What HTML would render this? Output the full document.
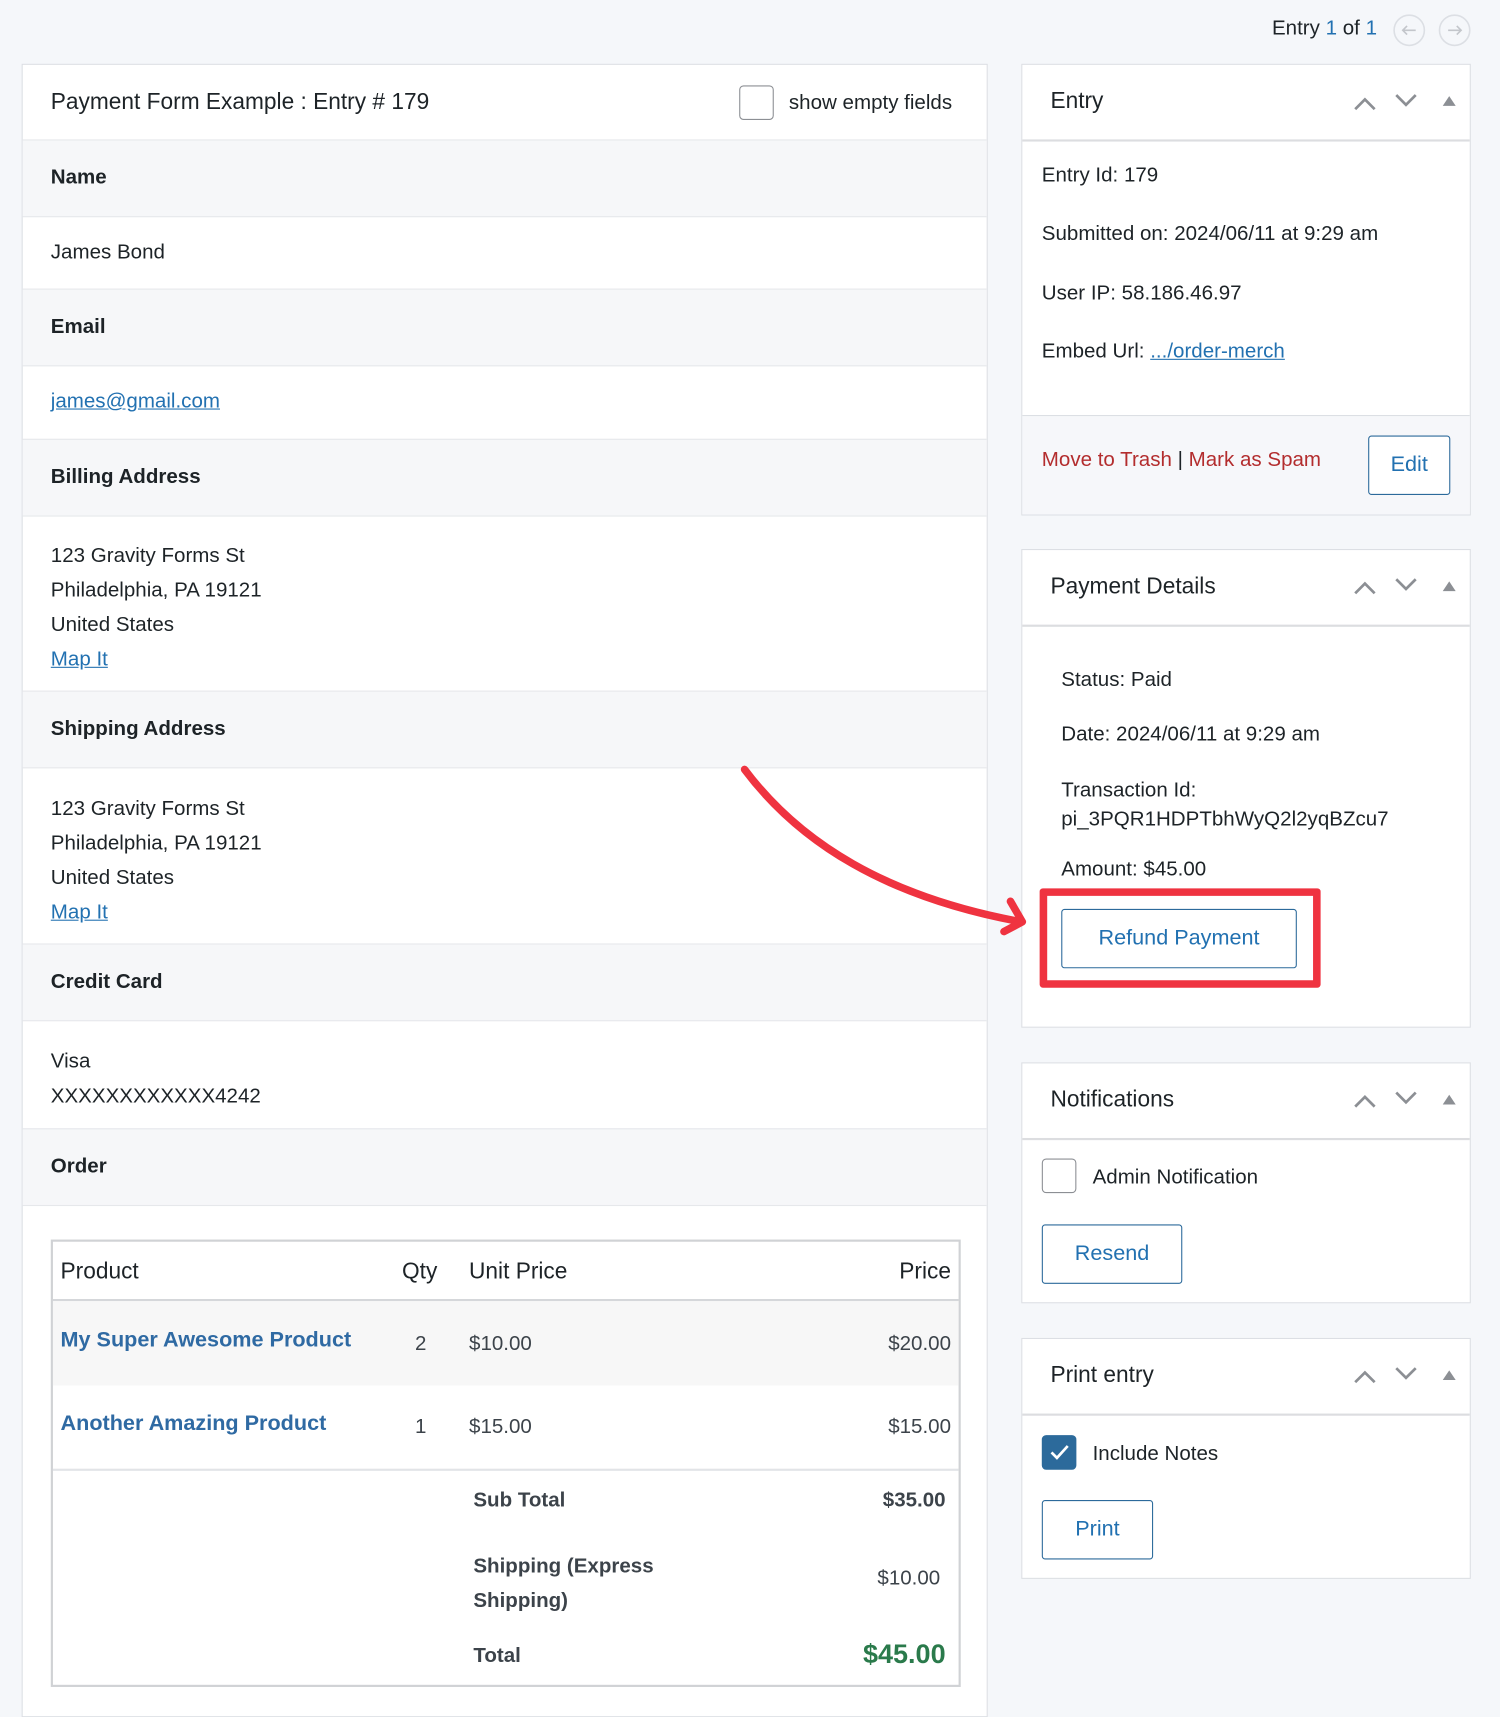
<!DOCTYPE html>
<html><head><meta charset="utf-8"><style>
html,body{margin:0;padding:0;width:1500px;height:1694px;overflow:hidden;background:#f5f7fa}
#w{position:absolute;left:0;top:0;width:1388px;height:1568px;transform:scale(1.0807);transform-origin:0 0;font-family:"Liberation Sans",sans-serif;color:#1d2327;font-size:19px}
.a{position:absolute;white-space:nowrap}
.box{position:absolute;background:#fff;border:1px solid #dcdfe4;box-sizing:border-box}
.lab{position:absolute;left:0;right:0;background:#f6f7f9;border-top:1px solid #e6e8eb;border-bottom:1px solid #e6e8eb;font-weight:bold}
.lab span,.val span{position:absolute;left:26px}
.hd{position:absolute;left:0;right:0;top:0;height:69px;border-bottom:2px solid #dcdde0}
.hd .t{position:absolute;left:26px;top:22px;font-size:21px}
a,.lk{color:#2271b1;text-decoration:underline}
.btn{position:absolute;border:1.5px solid #2c6a9b;border-radius:3px;color:#2271b1;font-size:20px;text-align:center;box-sizing:border-box;background:#fff}
.cb{position:absolute;width:32px;height:32px;border:1.5px solid #8c8f94;border-radius:4px;box-sizing:border-box;background:#fff}
.narrow{font-family:"Liberation Sans Narrow","Liberation Sans",sans-serif}
</style></head><body><div id="w">
<div class="a" style="left:1177px;top:16px;font-size:19px">Entry <span style="color:#2271b1">1</span> of <span style="color:#2271b1">1</span></div>
<svg class="a" style="left:1288px;top:12px" width="74" height="32"><circle cx="16" cy="16" r="14" fill="none" stroke="#dcdfe4" stroke-width="1.5"/><path d="M22 16H10M14 12l-4 4 4 4" stroke="#c3c6cb" stroke-width="1.5" fill="none"/><circle cx="58" cy="16" r="14" fill="none" stroke="#dcdfe4" stroke-width="1.5"/><path d="M52 16h12M60 12l4 4-4 4" stroke="#c3c6cb" stroke-width="1.5" fill="none"/></svg>

<div class="box" style="left:20px;top:59px;width:894px;height:1530px">
 <div class="a" style="left:26px;top:23px;font-size:21px">Payment Form Example : Entry # 179</div>
 <div class="cb" style="left:663px;top:19px"></div>
 <div class="a" style="left:709px;top:25px;font-size:19px">show empty fields</div>
 <div class="lab" style="top:69px;height:70px"><span style="top:24px">Name</span></div>
 <div class="a" style="left:26px;top:163px">James Bond</div>
 <div class="lab" style="top:207px;height:70px"><span style="top:24px">Email</span></div>
 <div class="a" style="left:26px;top:301px"><span class="lk">james@gmail.com</span></div>
 <div class="lab" style="top:346px;height:70px"><span style="top:24px">Billing Address</span></div>
 <div class="a" style="left:26px;top:439px;line-height:32px">123 Gravity Forms St<br>Philadelphia, PA 19121<br>United States<br><span class="lk">Map It</span></div>
 <div class="lab" style="top:579px;height:70px"><span style="top:24px">Shipping Address</span></div>
 <div class="a" style="left:26px;top:673px;line-height:32px">123 Gravity Forms St<br>Philadelphia, PA 19121<br>United States<br><span class="lk">Map It</span></div>
 <div class="lab" style="top:813px;height:70px"><span style="top:24px">Credit Card</span></div>
 <div class="a" style="left:26px;top:907px;line-height:32px">Visa<br>XXXXXXXXXXXX4242</div>
 <div class="lab" style="top:984px;height:70px"><span style="top:24px">Order</span></div>
 <div style="position:absolute;left:26px;top:1087px;width:842px;height:414px;border:2px solid #d0d2d5;box-sizing:border-box" class="narrow">
  <div class="a" style="left:7px;top:16px;font-size:21px">Product</div>
  <div class="a" style="left:323px;top:16px;font-size:21px">Qty</div>
  <div class="a" style="left:385px;top:16px;font-size:21px">Unit Price</div>
  <div class="a" style="right:7px;top:16px;font-size:21px">Price</div>
  <div style="position:absolute;left:0;right:0;top:53px;height:2px;background:#d5d7da"></div>
  <div style="position:absolute;left:0;right:0;top:55px;height:78px;background:#f7f7f7"></div>
  <div class="a" style="left:7px;top:80px;font-weight:bold;color:#2f6aa3;font-size:20px">My Super Awesome Product</div>
  <div class="a" style="left:335px;top:84px;color:#3c434a">2</div>
  <div class="a" style="left:385px;top:84px;color:#3c434a">$10.00</div>
  <div class="a" style="right:7px;top:84px;color:#3c434a">$20.00</div>
  <div class="a" style="left:7px;top:157px;font-weight:bold;color:#2f6aa3;font-size:20px">Another Amazing Product</div>
  <div class="a" style="left:335px;top:161px;color:#3c434a">1</div>
  <div class="a" style="left:385px;top:161px;color:#3c434a">$15.00</div>
  <div class="a" style="right:7px;top:161px;color:#3c434a">$15.00</div>
  <div style="position:absolute;left:0;right:0;top:210px;height:2px;background:#e2e4e7"></div>
  <div class="a" style="left:389px;top:229px;font-weight:bold;color:#3c434a">Sub Total</div>
  <div class="a" style="right:12px;top:229px;font-weight:bold;color:#3c434a">$35.00</div>
  <div class="a" style="left:389px;top:285px;font-weight:bold;color:#3c434a;line-height:32px">Shipping (Express<br>Shipping)</div>
  <div class="a" style="right:17px;top:301px;color:#3c434a">$10.00</div>
  <div class="a" style="left:389px;top:373px;font-weight:bold;color:#3c434a">Total</div>
  <div class="a" style="right:12px;top:368px;font-weight:bold;color:#2a7a4b;font-size:25px">$45.00</div>
 </div>
</div>

<div class="box" style="left:945px;top:59px;width:416px;height:418px">
 <div class="hd"><div class="t">Entry</div></div>
 <div class="a" style="left:18px;top:76px;line-height:54.3px">Entry Id: 179<br>Submitted on: 2024/06/11 at 9:29 am<br>User IP: 58.186.46.97<br>Embed Url: <span class="lk">.../order-merch</span></div>
 <div style="position:absolute;left:0;right:0;top:324px;bottom:0;background:#f6f7fa;border-top:1px solid #dcdfe4"></div>
 <div class="a" style="left:18px;top:355px;color:#b32d2e">Move to Trash <span style="color:#1d2327">|</span> Mark as Spam</div>
 <div class="btn" style="left:320px;top:343px;width:76px;height:55px;line-height:52px">Edit</div>
</div>

<div class="box" style="left:945px;top:508px;width:416px;height:443px">
 <div class="hd"><div class="t">Payment Details</div></div>
 <div class="a" style="left:36px;top:110px">Status: Paid</div>
 <div class="a" style="left:36px;top:160px">Date: 2024/06/11 at 9:29 am</div>
 <div class="a" style="left:36px;top:209px;line-height:27px">Transaction Id:<br>pi_3PQR1HDPTbhWyQ2l2yqBZcu7</div>
 <div class="a" style="left:36px;top:285px">Amount: $45.00</div>
 <div class="btn" style="left:36px;top:332px;width:218px;height:55px;line-height:52px">Refund Payment</div>
 <div style="position:absolute;left:16px;top:313px;width:260px;height:92px;border:7px solid #ef3340;border-radius:3px;box-sizing:border-box"></div>
</div>

<div class="box" style="left:945px;top:983px;width:416px;height:223px">
 <div class="hd"><div class="t">Notifications</div></div>
 <div class="cb" style="left:18px;top:88px"></div>
 <div class="a" style="left:65px;top:95px">Admin Notification</div>
 <div class="btn" style="left:18px;top:149px;width:130px;height:55px;line-height:52px">Resend</div>
</div>

<div class="box" style="left:945px;top:1238px;width:416px;height:223px">
 <div class="hd"><div class="t">Print entry</div></div>
 <div class="cb" style="left:18px;top:89px;background:#2c6a9b;border-color:#2c6a9b"><svg width="30" height="30" style="position:absolute;left:0;top:0"><path d="M8 15l5 5 10-11" stroke="#fff" stroke-width="2.5" fill="none"/></svg></div>
 <div class="a" style="left:65px;top:96px">Include Notes</div>
 <div class="btn" style="left:18px;top:149px;width:103px;height:55px;line-height:52px">Print</div>
</div>

<svg class="a" style="left:0;top:0" width="1388" height="1568">
<g fill="none" stroke="#8c8f94" stroke-width="2.5">
<path d="M1254 101l9-9 9 9M1292 88l9 9 9-9"/><path d="M1254 549l9-9 9 9M1292 536l9 9 9-9"/>
<path d="M1254 1024l9-9 9 9M1292 1011l9 9 9-9"/><path d="M1254 1279l9-9 9 9M1292 1266l9 9 9-9"/>
</g>
<g fill="#8c8f94"><path d="M1335 98l6-9 6 9z"/><path d="M1335 547l6-9 6 9z"/><path d="M1335 1022l6-9 6 9z"/><path d="M1335 1277l6-9 6 9z"/></g>
<g fill="none" stroke="#ef3340" stroke-width="7" stroke-linecap="round" stroke-linejoin="round">
<path d="M689 712C740 780 820 830 945 853"/><path d="M935 834l11 19-17 9"/>
</g>
</svg>
</div></body></html>
